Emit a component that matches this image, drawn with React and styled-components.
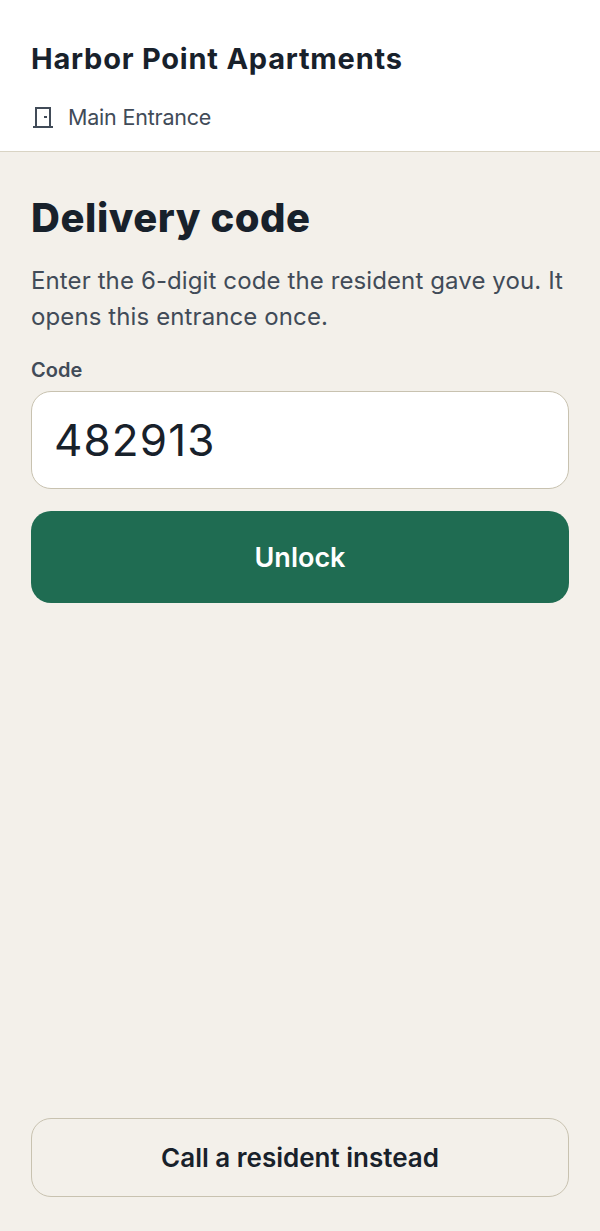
import React, { useState } from 'react';
import styled, { createGlobalStyle } from 'styled-components';

const Global = createGlobalStyle`
  html, body { margin: 0; padding: 0; background: #f3f0ea; }
  * { box-sizing: border-box; }
  body { font-family: Inter, "Liberation Sans", sans-serif; color: #18212b; }
`;

const Page = styled.div`
  display: flex;
  flex-direction: column;
  height: 1231px;
`;

const Header = styled.header`
  background: #fff;
  height: 152px;
  padding: 41px 31px 0;
  border-bottom: 1px solid #d9d4c4;
`;

const Title = styled.h1`
  margin: 0;
  font-size: 29px;
  line-height: 36px;
  font-weight: 700;
  letter-spacing: 0.78px;
  color: #18212b;
`;

const Location = styled.div`
  display: flex;
  align-items: center;
  gap: 13px;
  margin-top: 22px;
  height: 36px;
  font-size: 21.5px;
  letter-spacing: -0.2px;
  color: #414b58;
`;

const Main = styled.main`
  flex: 1;
  display: flex;
  flex-direction: column;
  padding: 42px 31px 34px;
`;

const Heading = styled.h2`
  margin: 0;
  font-size: 40px;
  line-height: 48px;
  font-weight: 800;
  letter-spacing: 0.55px;
  color: #18212b;
`;

const Lead = styled.p`
  margin: 21px 0 0;
  font-size: 24px;
  line-height: 36px;
  letter-spacing: 0.11px;
  color: #414b58;
`;

const Label = styled.label`
  display: block;
  margin-top: 21px;
  font-size: 20px;
  line-height: 28px;
  font-weight: 600;
  color: #414b58;
`;

const Input = styled.input`
  display: block;
  width: 100%;
  height: 98px;
  margin-top: 7px;
  padding: 0 22px;
  background: #fff;
  border: 1px solid #c8c2b0;
  border-radius: 20px;
  font-family: Inter, "Liberation Sans", sans-serif;
  font-size: 44px;
  letter-spacing: 1.1px;
  color: #18212b;
  outline: none;
`;

const Button = styled.button`
  display: block;
  width: 100%;
  height: ${(p) => (p.$secondary ? '79px' : '92px')};
  margin-top: ${(p) => (p.$secondary ? 'auto' : '22px')};
  background: ${(p) => (p.$secondary ? 'transparent' : '#1f6c52')};
  border: ${(p) => (p.$secondary ? '1px solid #c8c2b0' : 'none')};
  border-radius: 20px;
  font-family: Inter, "Liberation Sans", sans-serif;
  font-size: ${(p) => (p.$secondary ? '26px' : '27px')};
  font-weight: 600;
  color: ${(p) => (p.$secondary ? '#18212b' : '#fff')};
`;

const DoorIcon = () => (
  <svg width="24" height="24" viewBox="0 0 24 24" fill="none" stroke="#414b58" strokeWidth="2">
    <path d="M2 22h20" />
    <path d="M5 22V3h14v19" />
    <path d="M13 12h3" />
  </svg>
);

export default function App() {
  const [code, setCode] = useState('482913');

  return (
    <Page>
      <Global />
      <Header>
        <Title>Harbor Point Apartments</Title>
        <Location>
          <DoorIcon />
          Main Entrance
        </Location>
      </Header>
      <Main>
        <Heading>Delivery code</Heading>
        <Lead>Enter the 6-digit code the resident gave you. It opens this entrance once.</Lead>
        <Label htmlFor="code">Code</Label>
        <Input id="code" value={code} onChange={(e) => setCode(e.target.value)} />
        <Button>Unlock</Button>
        <Button $secondary>Call a resident instead</Button>
      </Main>
    </Page>
  );
}
